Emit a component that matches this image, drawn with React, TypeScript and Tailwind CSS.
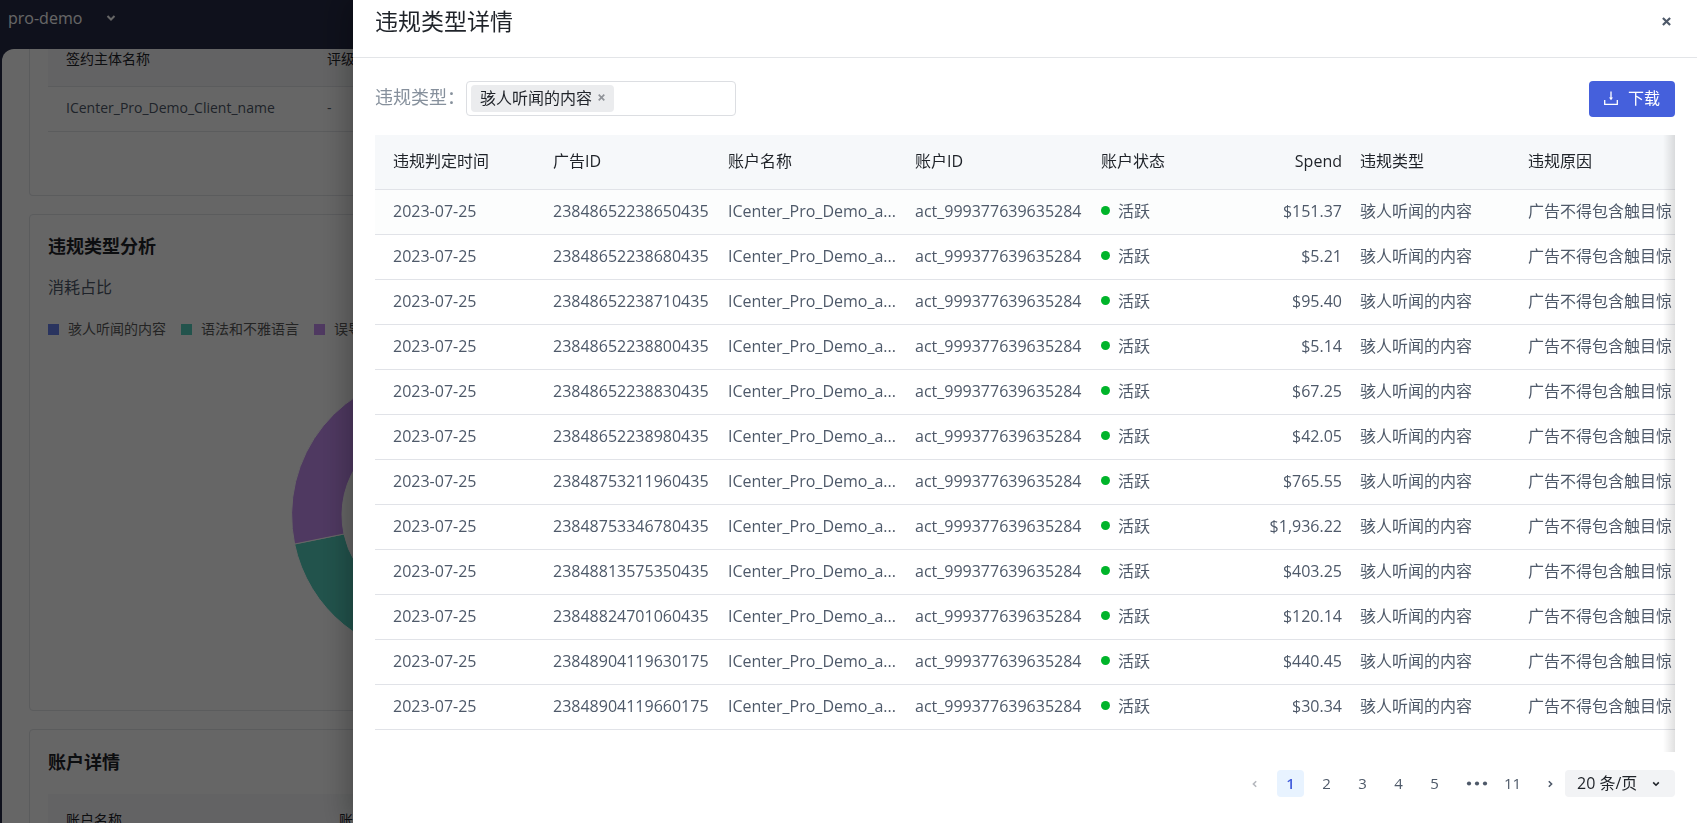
import { useState } from "react";

type AdRow = { adId: string; spend: string };

const rows: AdRow[] = [
  { adId: "23848652238650435", spend: "$151.37" },
  { adId: "23848652238680435", spend: "$5.21" },
  { adId: "23848652238710435", spend: "$95.40" },
  { adId: "23848652238800435", spend: "$5.14" },
  { adId: "23848652238830435", spend: "$67.25" },
  { adId: "23848652238980435", spend: "$42.05" },
  { adId: "23848753211960435", spend: "$765.55" },
  { adId: "23848753346780435", spend: "$1,936.22" },
  { adId: "23848813575350435", spend: "$403.25" },
  { adId: "23848824701060435", spend: "$120.14" },
  { adId: "23848904119630175", spend: "$440.45" },
  { adId: "23848904119660175", spend: "$30.34" },
];

const legend = [
  { label: "骇人听闻的内容", color: "bg-[#6982ee]" },
  { label: "语法和不雅语言", color: "bg-[#55cfbe]" },
  { label: "误导", color: "bg-[#c58ef2]" },
];

function Chevron({ d, className }: { d: string; className: string }) {
  return (
    <svg viewBox="0 0 10 10" aria-hidden="true" className={className} fill="none" stroke="currentColor" strokeWidth="2">
      <path d={d} />
    </svg>
  );
}

function Cross({ className }: { className: string }) {
  return (
    <svg viewBox="0 0 10 10" aria-hidden="true" className={className} fill="none" stroke="currentColor" strokeWidth="2.4">
      <path d="M1 1l8 8M9 1l-8 8" />
    </svg>
  );
}

function Donut() {
  return (
    <svg viewBox="0 0 284 284" aria-hidden="true" className="h-[284px] w-[284px]" stroke="#fff" strokeWidth="1">
      <path fill="#6982ee" d="M142 0.6A141.4 141.4 0 0 1 142 283.4V233A91 91 0 0 0 142 51Z" />
      <path fill="#55cfbe" d="M142 283.4A141.4 141.4 0 0 1 3.6 171L53 161A91 91 0 0 0 142 233Z" />
      <path fill="#c58ef2" d="M3.6 171A141.4 141.4 0 0 1 142 0.6V51A91 91 0 0 0 53 161Z" />
    </svg>
  );
}

/** The report page that stays dimmed behind the drawer. */
function ReportPage() {
  return (
    <div className="flex h-screen flex-col overflow-hidden bg-[#262b46]">
      <header className="flex h-[49px] shrink-0 items-start px-2 pt-1.5">
        <button type="button" className="flex items-center gap-6 text-base leading-6 text-white">
          pro-demo
          <Chevron d="M1.5 3l3.5 3.5L8.5 3" className="h-2.5 w-2.5" />
        </button>
      </header>
      <main className="ml-0.5 flex-1 overflow-hidden rounded-tl-xl bg-white pl-[27px] pr-9">
        <section className="h-[147px] rounded-b border border-t-0 border-[#e3e5e9] px-[18px]">
          <table className="w-full table-fixed text-left text-sm">
            <thead>
              <tr className="h-[37px] border-b border-[#e3e5e9] bg-[#f7f8fa] text-[#1f2329]">
                <th className="w-[261px] pb-[17px] pl-[18px] font-normal">签约主体名称</th>
                <th className="pb-[17px] pl-[18px] font-normal">评级</th>
              </tr>
            </thead>
            <tbody>
              <tr className="h-[45px] border-b border-[#e3e5e9] text-[#4e5969]">
                <td className="pb-0.5 pl-[18px]">ICenter_Pro_Demo_Client_name</td>
                <td className="pb-0.5 pl-[18px]">-</td>
              </tr>
            </tbody>
          </table>
        </section>
        <div className="mt-[18px] grid grid-cols-2 gap-[18px]">
          <section className="h-[497px] rounded border border-[#e3e5e9] px-[18px] pt-[17px]">
            <h2 className="text-lg font-bold leading-7 text-[#1f2329]">违规类型分析</h2>
            <h3 className="mt-[15px] text-base leading-6 text-[#4e5969]">消耗占比</h3>
            <ul className="mt-5 flex text-sm leading-5 text-[#5b5b5b]">
              {legend.map((l) => (
                <li key={l.label} className="flex w-[133px] items-center gap-[9px] whitespace-nowrap">
                  <span className={`h-[11px] w-[11px] ${l.color}`} />
                  {l.label}
                </li>
              ))}
            </ul>
            <div className="mt-[34px] flex justify-center">
              <Donut />
            </div>
          </section>
          <section className="rounded border border-[#e3e5e9]" />
        </div>
        <section className="mt-[18px] rounded-t border border-[#e3e5e9] px-[18px] pt-[18px]">
          <h2 className="text-lg font-bold leading-7 text-[#1f2329]">账户详情</h2>
          <table className="mt-[18px] w-full table-fixed text-left text-sm text-[#1f2329]">
            <thead>
              <tr className="h-[54px] bg-[#f7f8fa]">
                <th className="w-[273px] pb-0.5 pl-[18px] font-normal">账户名称</th>
                <th className="pb-0.5 pl-[18px] font-normal">账户ID</th>
              </tr>
            </thead>
          </table>
        </section>
      </main>
    </div>
  );
}

function ViolationTable() {
  return (
    <div className="relative mt-[18px] h-[617px] overflow-hidden">
      <table className="w-full min-w-[1299px] table-fixed text-left text-base leading-6">
        <colgroup>
          <col className="w-[169px]" />
          <col className="w-[175px]" />
          <col className="w-[187px]" />
          <col className="w-[186px]" />
          <col className="w-[94px]" />
          <col className="w-[165px]" />
          <col className="w-[168px]" />
          <col />
        </colgroup>
        <thead>
          <tr className="h-[54px] border-b border-[#e1e3e8] bg-[#f6f8fa] text-[#1f2329]">
            <th className="pb-0.5 pl-[18px] font-normal">违规判定时间</th>
            <th className="px-[9px] pb-0.5 font-normal">广告ID</th>
            <th className="px-[9px] pb-0.5 font-normal">账户名称</th>
            <th className="px-[9px] pb-0.5 font-normal">账户ID</th>
            <th className="px-[9px] pb-0.5 font-normal">账户状态</th>
            <th className="px-[9px] pb-0.5 text-right font-normal">Spend</th>
            <th className="px-[9px] pb-0.5 font-normal">违规类型</th>
            <th className="px-[9px] pb-0.5 font-normal">违规原因</th>
          </tr>
        </thead>
        <tbody className="text-[#4e5969]">
          {rows.map((r) => (
            <tr key={r.adId} className="h-[45px] border-b border-[#e1e3e8] first:bg-[#fcfdfd]">
              <td className="pb-0.5 pl-[18px]">2023-07-25</td>
              <td className="px-[9px] pb-0.5">{r.adId}</td>
              <td className="whitespace-nowrap px-[9px] pb-0.5">ICenter_Pro_Demo_a...</td>
              <td className="px-[9px] pb-0.5">act_999377639635284</td>
              <td className="px-[9px] pb-0.5">
                <span className="flex items-center gap-2 whitespace-nowrap">
                  <span className="h-[9px] w-[9px] rounded-full bg-[#00b42a]" />
                  活跃
                </span>
              </td>
              <td className="px-[9px] pb-0.5 text-right">{r.spend}</td>
              <td className="px-[9px] pb-0.5">骇人听闻的内容</td>
              <td className="whitespace-nowrap pb-0.5 pl-[9px]">广告不得包含触目惊</td>
            </tr>
          ))}
        </tbody>
      </table>
      <div className="pointer-events-none absolute inset-y-0 right-0 w-3 bg-linear-to-l from-black/12 to-transparent" />
    </div>
  );
}

function Pagination() {
  const [page, setPage] = useState(1);

  return (
    <nav aria-label="分页" className="mt-[18px] flex items-center justify-end text-[15px] leading-5 text-[#4e5969]">
      <button type="button" aria-label="上一页" className="mr-[9px] flex h-[27px] w-[27px] items-center justify-center text-[#b5b8be]">
        <Chevron d="M6.5 1.5L3 5l3.5 3.5" className="h-2 w-2" />
      </button>
      {[1, 2, 3, 4, 5].map((n) => (
        <button key={n} type="button" onClick={() => setPage(n)}
          className={`mr-[9px] h-[27px] w-[27px] rounded pb-0.5 ${n === page ? "bg-[#e8f3ff] font-semibold text-[#4560dc]" : ""}`}>
          {n}
        </button>
      ))}
      <svg viewBox="0 0 40 27" aria-hidden="true" className="mr-0.5 h-[27px] w-10" fill="currentColor">
        <circle cx="12" cy="13.5" r="2.1" />
        <circle cx="20" cy="13.5" r="2.1" />
        <circle cx="28" cy="13.5" r="2.1" />
      </svg>
      <button type="button" onClick={() => setPage(11)} className="mr-[9px] h-[27px] w-[27px] rounded pb-0.5">11</button>
      <button type="button" aria-label="下一页" className="flex h-[27px] w-[30px] items-center justify-center">
        <Chevron d="M3.5 1.5L7 5L3.5 8.5" className="h-2 w-2" />
      </button>
      <div className="grid items-center">
        <select aria-label="每页条数" className="col-start-1 row-start-1 h-[27px] w-[110px] appearance-none rounded bg-[#f2f3f5] pb-0.5 pl-3 text-base leading-6 text-[#1f2329]">
          <option>20 条/页</option>
        </select>
        <Chevron d="M1.5 3l3.5 3.5L8.5 3" className="pointer-events-none col-start-1 row-start-1 mr-[15px] h-2 w-2 justify-self-end text-[#1f2329]" />
      </div>
    </nav>
  );
}

function DetailDrawer() {
  return (
    <div role="dialog" aria-labelledby="drawer-title" className="fixed inset-y-0 left-[353px] right-0 overflow-hidden bg-white shadow-[-4px_0_28px_rgba(0,0,0,0.3)]">
      <header className="flex h-[58px] items-start justify-between border-b border-[#e3e5e8] px-[22px] pt-[5px]">
        <h1 id="drawer-title" className="text-[23px] leading-8 text-[#1f2329]">违规类型详情</h1>
        <button type="button" aria-label="关闭" className="flex h-8 w-[18px] items-center justify-center text-[#4e5969]">
          <Cross className="h-[9px] w-[9px]" />
        </button>
      </header>
      <div className="px-[22px] pt-[23px]">
        <div className="flex items-start justify-between">
          <div className="flex items-start">
            <label htmlFor="violation-type" className="w-[91px] whitespace-nowrap pt-0.5 text-lg leading-7 text-[#86909c]">违规类型：</label>
            <div className="flex h-[35px] w-[270px] items-center rounded border border-[#dcdee2] px-1">
              <span className="flex h-[27px] shrink-0 items-center gap-1.5 rounded bg-[#ebecee] px-[9px] pb-0.5 text-base leading-6 text-[#1f2329]">
                骇人听闻的内容
                <button type="button" aria-label="移除" className="text-[#909399]">
                  <Cross className="h-[7px] w-[7px]" />
                </button>
              </span>
              <input id="violation-type" type="text" className="min-w-0 flex-1 px-1 text-base outline-none" />
            </div>
          </div>
          <button type="button" className="flex h-9 w-[86px] items-center justify-center gap-2.5 rounded bg-[#4560dc] pb-0.5 text-base leading-6 text-white">
            <svg viewBox="0 0 14 14" aria-hidden="true" className="h-3.5 w-3.5" fill="none" stroke="currentColor" strokeWidth="1.3">
              <path d="M0.7 9v4.3h12.6V9M7 0.5v7.5" />
              <path d="M5 6.5h4L7 9.2z" fill="currentColor" stroke="none" />
            </svg>
            下载
          </button>
        </div>
        <ViolationTable />
        <Pagination />
      </div>
    </div>
  );
}

export default function App() {
  return (
    <div className="font-['Open_Sans','Noto_Sans_CJK_SC',sans-serif]">
      <ReportPage />
      <div className="fixed inset-0 bg-black/60" />
      <DetailDrawer />
    </div>
  );
}
